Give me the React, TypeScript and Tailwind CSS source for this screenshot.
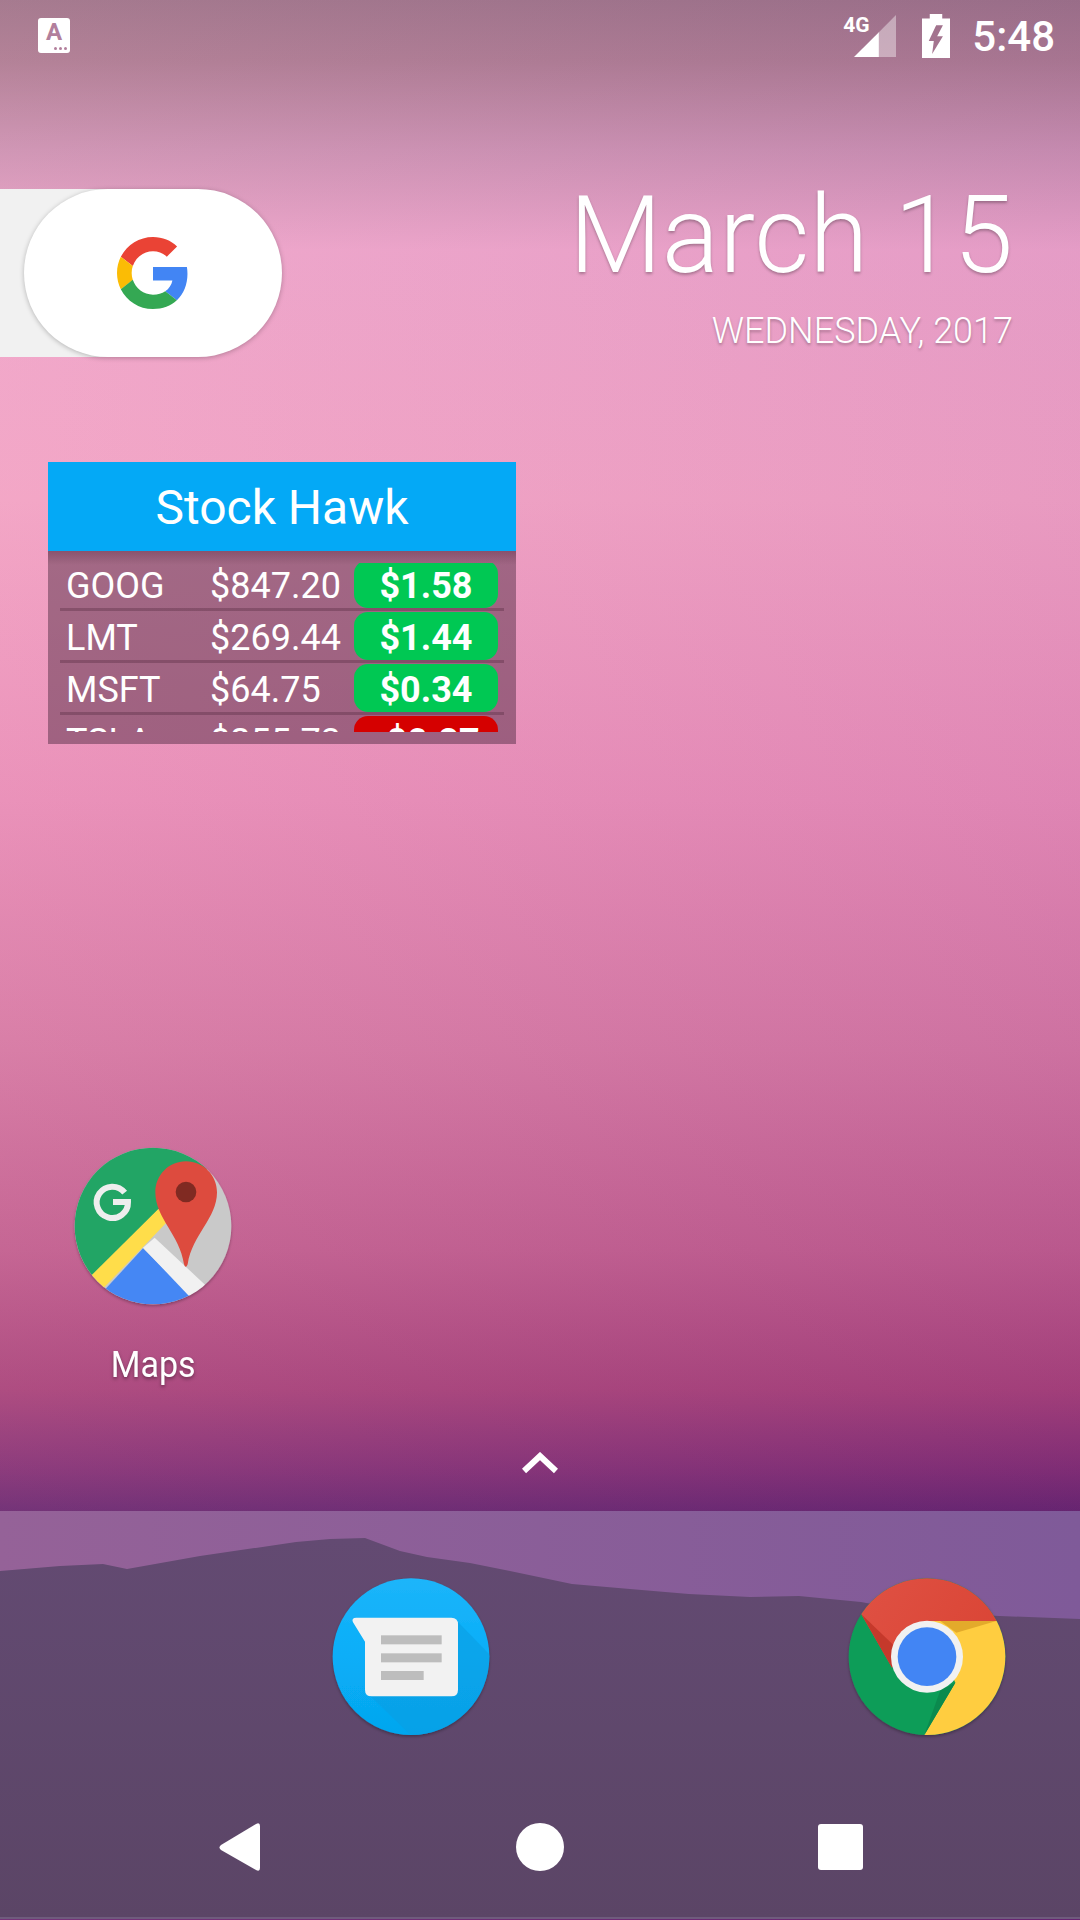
import React from "react";

const rows = [
  { s: "GOOG", p: "$847.20", c: "$1.58", bg: "bg-[#00c853]" },
  { s: "LMT", p: "$269.44", c: "$1.44", bg: "bg-[#00c853]" },
  { s: "MSFT", p: "$64.75", c: "$0.34", bg: "bg-[#00c853]" },
  { s: "TSLA", p: "$255.73", c: "-$0.27", bg: "bg-[#d50000]" },
];

const roboto = "font-['Roboto','Liberation_Sans',sans-serif]";

function GoogleG() {
  return (
    <svg width="72" height="72" viewBox="0 0 48 48">
      <path fill="#EA4335" d="M24 9.5c3.54 0 6.71 1.22 9.21 3.6l6.85-6.85C35.9 2.38 30.47 0 24 0 14.62 0 6.51 5.38 2.56 13.22l7.98 6.19C12.43 13.72 17.74 9.5 24 9.5z" />
      <path fill="#4285F4" d="M46.98 24.55c0-1.57-.15-3.09-.38-4.55H24v9.02h12.94c-.58 2.96-2.26 5.48-4.78 7.18l7.73 6c4.51-4.18 7.09-10.36 7.09-17.65z" />
      <path fill="#FBBC05" d="M10.53 28.59c-.48-1.45-.76-2.99-.76-4.59s.27-3.14.76-4.59l-7.98-6.19C.92 16.46 0 20.12 0 24c0 3.88.92 7.54 2.56 10.78l7.97-6.19z" />
      <path fill="#34A853" d="M24 48c6.48 0 11.93-2.13 15.89-5.81l-7.73-6c-2.15 1.45-4.92 2.3-8.16 2.3-6.26 0-11.57-4.22-13.47-9.91l-7.98 6.19C6.51 42.62 14.62 48 24 48z" />
    </svg>
  );
}

function MapsIcon() {
  return (
    <svg width="190" height="190" viewBox="-5 0 570 570">
      <defs>
        <clipPath id="mapsClip"><circle cx="280" cy="285" r="235" /></clipPath>
        <filter id="mapsShadow" x="-10%" y="-10%" width="120%" height="120%">
          <feDropShadow dx="0" dy="5" stdDeviation="5" floodColor="#000" floodOpacity="0.3" />
        </filter>
      </defs>
      <circle cx="280" cy="285" r="235" fill="#c9c9c9" filter="url(#mapsShadow)" />
      <g clipPath="url(#mapsClip)">
        <polygon points="0,530 0,0 580,0 300,232" fill="#22a565" />
        <polygon points="60,468 296,234 325,270 125,478" fill="#ffdd4a" />
        <polygon points="95,520 250,352 420,520" fill="#4587f4" />
        <polygon points="250,350 285,320 440,465 388,495" fill="#f1f1f1" />
      </g>
      <path d="M195 185 A47 47 0 1 0 205 213 L160 213" fill="none" stroke="#eeeeee" strokeWidth="18" />
      <path d="M379 91 C327 91 287 133 287 184 C287 262 360 310 373 400 Q378 415 384 400 C398 310 472 262 472 184 C472 133 431 91 379 91 Z" fill="#dd4b3e" />
      <circle cx="379" cy="183" r="31" fill="#802a22" />
    </svg>
  );
}

function MessagesIcon() {
  return (
    <svg width="190" height="190" viewBox="-13 0 570 570">
      <defs>
        <linearGradient id="msgBg" x1="0" y1="0" x2="0" y2="1">
          <stop offset="0" stopColor="#1db5fa" />
          <stop offset="0.5" stopColor="#08aef8" />
          <stop offset="1" stopColor="#05a6ee" />
        </linearGradient>
        <clipPath id="msgClip"><circle cx="272" cy="287" r="235" /></clipPath>
        <filter id="msgShadow" x="-10%" y="-10%" width="120%" height="120%">
          <feDropShadow dx="0" dy="5" stdDeviation="5" floodColor="#000" floodOpacity="0.3" />
        </filter>
      </defs>
      <circle cx="272" cy="287" r="235" fill="url(#msgBg)" filter="url(#msgShadow)" />
      <g clipPath="url(#msgClip)">
        <polygon points="405,175 570,345 570,570 320,570 140,395" fill="#0a9fe3" opacity="0.6" />
      </g>
      <path d="M108 170 L393 170 Q413 170 413 190 L413 386 Q413 406 393 406 L154 406 Q134 406 134 386 L134 242 L98 184 Q92 170 108 170 Z" fill="#f2f2f2" />
      <rect x="182" y="223" width="182" height="27" fill="#bdbdbd" />
      <rect x="182" y="277" width="182" height="27" fill="#bdbdbd" />
      <rect x="182" y="330" width="128" height="27" fill="#bdbdbd" />
    </svg>
  );
}

function ChromeIcon() {
  return (
    <svg width="190" height="190" viewBox="5 0 570 570">
      <defs>
        <filter id="chShadow" x="-10%" y="-10%" width="120%" height="120%">
          <feDropShadow dx="0" dy="5" stdDeviation="5" floodColor="#000" floodOpacity="0.3" />
        </filter>
        <linearGradient id="chRed" x1="0" y1="0" x2="1" y2="0.4">
          <stop offset="0" stopColor="#e05245" />
          <stop offset="1" stopColor="#da4535" />
        </linearGradient>
        <clipPath id="chClip"><circle cx="290" cy="287" r="235" /></clipPath>
      </defs>
      <circle cx="290" cy="287" r="235" fill="#0f9d58" filter="url(#chShadow)" />
      <g clipPath="url(#chClip)">
        <polygon points="55,100 290,20 570,20 570,180 290,180 185,320 93,160" fill="url(#chRed)" />
        <polygon points="93,160 185,320 187,250" fill="#c5392b" />
        <polygon points="290,180 570,180 570,570 282,522 375,365" fill="#ffcd40" />
        <polygon points="330,180 498,180 378,215" fill="#e3aa2b" />
        <polygon points="282,522 375,365 330,388" fill="#0b8a4e" />
      </g>
      <circle cx="290" cy="287" r="108" fill="#f1f1f1" />
      <circle cx="290" cy="287" r="88" fill="#4285f4" />
    </svg>
  );
}

export default function App() {
  return (
    <div className={`relative flex h-[1920px] w-[1080px] flex-col overflow-hidden text-white ${roboto} bg-[linear-gradient(180deg,#9c7389_0px,#ab7b92_60px,#cb92b3_150px,#eea6cc_250px,#f2a4c6_500px,#e88db8_800px,#d477a3_1050px,#bf5c8e_1250px,#a54079_1390px,#7f2d74_1470px,#64246f_1512px,#64246f_1920px)]`}>
      <div className="pointer-events-none absolute inset-0 bg-[linear-gradient(90deg,rgba(255,190,200,0.1),rgba(120,40,130,0.08))]" />

      {/* status bar */}
      <div className="relative flex h-[72px] items-start justify-between pl-[38px] pr-[25px]">
        <div className="relative mt-[18px] flex h-[35px] w-[32px] justify-center rounded-[3px] bg-white">
          <span className="text-[24px] font-bold leading-[28px] text-[#b27f9c]">A</span>
          <span className="absolute bottom-[3px] right-[3px] flex gap-[2px]">
            <i className="h-[3px] w-[3px] rounded-full bg-[#b27f9c]" />
            <i className="h-[3px] w-[3px] rounded-full bg-[#b27f9c]" />
            <i className="h-[3px] w-[3px] rounded-full bg-[#b27f9c]" />
          </span>
        </div>
        <div className="flex items-start">
          <div className="relative mt-[15px] h-[42px] w-[53px]">
            <span className="absolute left-0 top-0 text-[21px] font-bold leading-[20px]">4G</span>
            <svg className="absolute bottom-0 right-0" width="42" height="42" viewBox="108 45 125 125">
              <polygon points="108,170 182,96 182,170" fill="#fff" />
              <polygon points="182,170 182,96 233,45 233,170" fill="#fff" fillOpacity="0.4" />
            </svg>
          </div>
          <svg className="ml-[26px] mt-[14px]" width="28" height="44" viewBox="310 42 83 130">
            <path fillRule="evenodd" fill="#fff" d="M333 42h37v13h23v117h-83V55h23z M352 75 L330 122 L345 122 L340 160 L372 108 L355 108 L372 75 Z" />
          </svg>
          <span className="ml-[22px] mt-[12px] text-[42px] font-medium leading-[50px]">5:48</span>
        </div>
      </div>

      {/* google pill and date */}
      <div className="relative mt-[117px] flex h-[168px] justify-between">
        <div className="absolute left-0 top-0 h-full w-[150px] bg-[#f1f1f1]" />
        <div className="relative ml-[24px] flex h-[168px] w-[258px] items-center justify-center rounded-[84px] bg-white shadow-[0_1px_5px_rgba(0,0,0,0.25)]">
          <GoogleG />
        </div>
        <div className="mr-[67px] flex flex-col items-end [text-shadow:0_2px_3px_rgba(0,0,0,0.28)]">
          <span className="mt-[-17px] text-[107px] font-light leading-[127px]">March 15</span>
          <span className="mt-[12px] text-[36px] font-light leading-[40px]">WEDNESDAY, 2017</span>
        </div>
      </div>

      {/* widget */}
      <div className="relative ml-[48px] mt-[105px] flex h-[282px] w-[468px] flex-col bg-[rgba(60,30,50,0.43)]">
        <div className="relative z-10 flex h-[89px] items-center justify-center bg-[#04a9f6] pt-[2px] text-[48px] leading-[56px]">
          Stock Hawk
        </div>
        <div className="absolute left-0 top-[89px] h-[14px] w-full bg-[linear-gradient(180deg,rgba(60,20,40,0.25),rgba(60,20,40,0))]" />
        <div className="relative mt-[12px] h-[169px] overflow-hidden px-[12px]">
          <div className="mt-[-3px] flex flex-col">
            {rows.map((r) => (
              <div key={r.s} className="flex h-[52px] flex-col">
                <div className="flex h-[48px] items-center px-[6px] text-[36px] leading-[48px]">
                  <span className="w-[144px] pt-[4px]">{r.s}</span>
                  <span className="w-[144px] whitespace-nowrap pt-[4px]">{r.p}</span>
                  <span className={`flex h-[48px] w-[144px] items-center justify-center rounded-[14px] pt-[4px] font-bold ${r.bg}`}>{r.c}</span>
                </div>
                <div className="h-[3px] bg-[rgba(70,30,50,0.3)]" />
              </div>
            ))}
          </div>
        </div>
      </div>

      {/* maps */}
      <div className="relative mt-[387px] grid grid-cols-4 px-[24px]">
        <div className="flex flex-col items-center">
          <MapsIcon />
          <span className="mt-[23px] scale-x-[0.92] text-[37px] leading-[42px] [text-shadow:0_2px_4px_rgba(0,0,0,0.4)]">Maps</span>
        </div>
      </div>

      {/* chevron */}
      <div className="relative mt-[66px] flex h-[24px] justify-center">
        <svg width="36" height="22" viewBox="0 0 36 22">
          <polyline points="2,19 18,4 34,19" fill="none" stroke="#fff" strokeWidth="6" />
        </svg>
      </div>

      {/* dock */}
      <div className="relative mt-[35px] flex h-[408px] flex-col bg-[linear-gradient(90deg,#956298,#7f5a99)]">
        <svg className="absolute inset-0" width="1080" height="408" viewBox="0 1512 1080 408" preserveAspectRatio="none">
          <defs>
            <linearGradient id="mtn" x1="0" y1="0" x2="0" y2="1">
              <stop offset="0" stopColor="#634a72" />
              <stop offset="1" stopColor="#5b4566" />
            </linearGradient>
          </defs>
          <path d="M0 1572 L60 1567 L103 1565 L127 1570 L200 1557 L296 1543 L330 1540 L365 1539 L400 1552 L427 1558 L470 1564 L510 1572 L572 1585 L630 1590 L689 1595 L750 1598 L799 1597 L861 1603 L916 1613 L1000 1617 L1080 1620 L1080 1920 L0 1920 Z" fill="url(#mtn)" />
        </svg>
        <div className="relative mt-[50px] grid h-[190px] grid-cols-4 px-[24px]">
          <div />
          <div className="flex justify-center"><MessagesIcon /></div>
          <div />
          <div className="flex justify-center"><ChromeIcon /></div>
        </div>
        <div className="relative mt-[66px] flex h-[60px] items-center">
          <div className="flex w-full items-center justify-between pl-[219px] pr-[217px]">
            <svg width="42" height="48" viewBox="0 0 42 48">
              <path d="M2 22 L37 1 Q41 -1 41 3 L41 45 Q41 49 37 47 L2 27 Q-1 24.500 2 22 Z" fill="#fff" />
            </svg>
            <div className="h-[48px] w-[48px] rounded-full bg-white" />
            <div className="h-[46px] w-[45px] rounded-[3px] bg-white" />
          </div>
        </div>
        <div className="absolute bottom-0 left-0 h-[2px] w-full bg-[#6f5b7d]" />
      </div>
    </div>
  );
}
